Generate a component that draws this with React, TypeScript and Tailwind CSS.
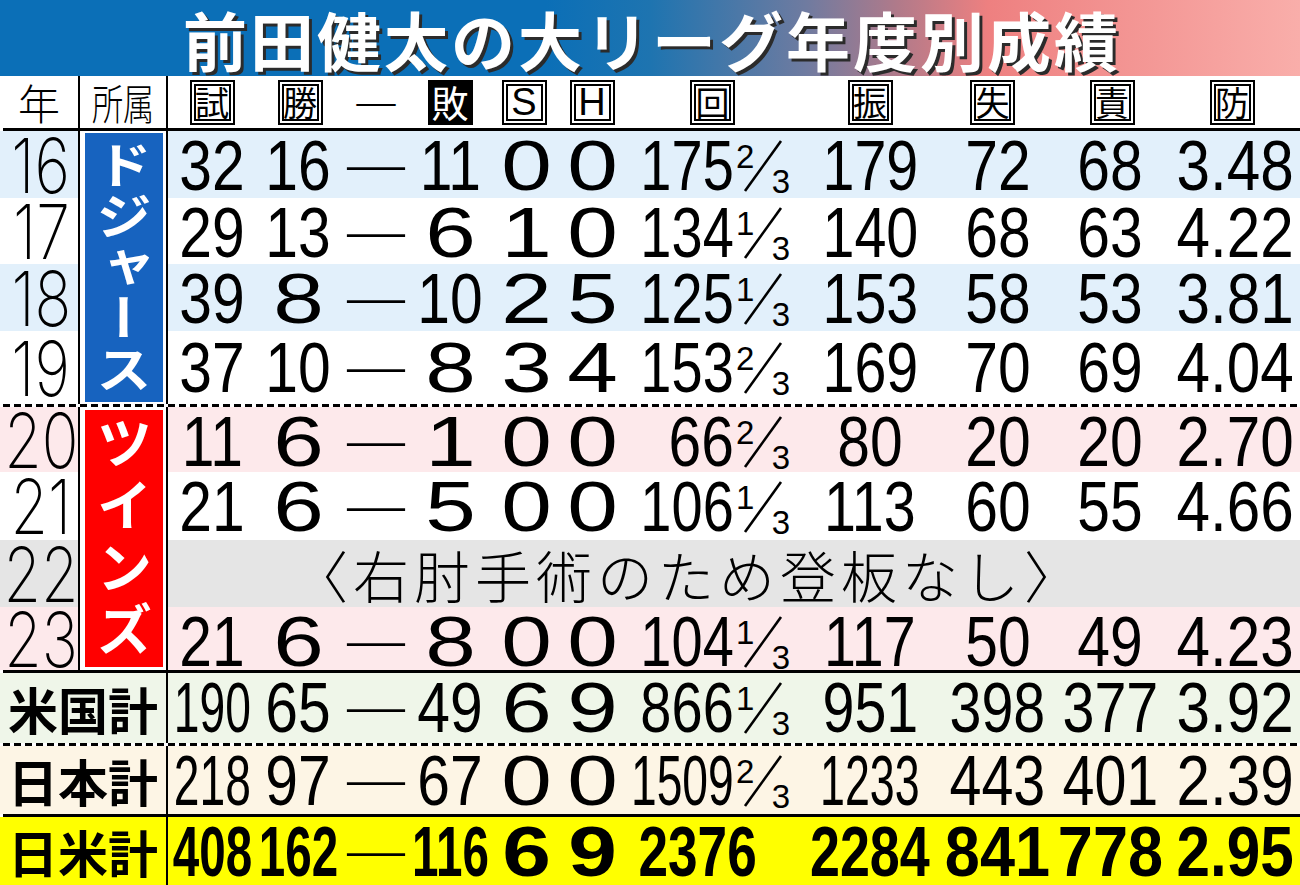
import React from 'react';

const NUM = "font-['Liberation_Sans',Arial,sans-serif]";
const JP = "font-['Noto_Sans_CJK_JP',sans-serif]";
const YEARF = "font-['Inter','DejaVu_Sans',sans-serif] font-extralight";

const BLUE = 'bg-[#e2f0fb]';
const WHITE = 'bg-white';
const PINK = 'bg-[#fde9eb]';
const GRAY = 'bg-[#e5e5e5]';
const GREEN = 'bg-[#eff6e9]';
const CREAM = 'bg-[#fdf5e5]';
const YELLOW = 'bg-[#ffff00]';

const COLS =
  'grid h-full grid-cols-[88px_84px_72px_76px_76px_56px_175px_150px_105px_120px_130px] items-center';

function scaleFor(col: number, v: string, bold?: boolean): string {
  if (v.includes('.')) return 'scale-x-[0.86]';
  if (v.length === 1) return bold ? 'scale-x-[1.25]' : 'scale-x-[1.3]';
  if (v.length === 2) return 'scale-x-[0.84]';
  if (v.length === 3) {
    if (col <= 3) return bold ? 'scale-x-[0.68]' : 'scale-x-[0.66]';
    return bold ? 'scale-x-[0.9]' : 'scale-x-[0.82]';
  }
  return bold ? 'scale-x-[0.77]' : 'scale-x-[0.64]';
}

function ipScale(v: string, bold?: boolean): string {
  if (bold) return 'scale-x-[0.76]';
  if (v.length === 2) return 'scale-x-[0.84]';
  if (v.length === 3) return 'scale-x-[0.8]';
  return 'scale-x-[0.66]';
}

function N({ col, v, bold }: { col: number; v: string; bold?: boolean }) {
  return <span className={`inline-block leading-none ${scaleFor(col, v, bold)}`}>{v}</span>;
}

function Frac({ n }: { n: string }) {
  return (
    <span className="relative ml-[2px] inline-block h-[52px] w-[54px] shrink-0">
      <span className="absolute left-[0px] top-[0px] text-[33px] leading-none">{n}</span>
      <svg className="absolute left-0 top-0" width="54" height="52" viewBox="0 0 54 52">
        <line x1="45" y1="1" x2="9" y2="51" stroke="#000" strokeWidth="2.6" />
      </svg>
      <span className="absolute bottom-[-6px] right-[0px] text-[33px] leading-none">3</span>
    </span>
  );
}

function DataCells({ d, bold }: { d: string[]; bold?: boolean }) {
  const [g, w, l, s, h, ip, fr, so, r, er, era] = d;
  return (
    <div className={`${COLS} text-[70px] text-black ${NUM} ${bold ? 'font-bold' : 'font-normal'}`}>
      <div className="flex justify-center">
        <N col={0} v={g} bold={bold} />
      </div>
      <div className="flex justify-center">
        <N col={1} v={w} bold={bold} />
      </div>
      <div className={`flex justify-center ${JP} text-[68px] font-normal leading-none`}>
        <span className="inline-block leading-none">―</span>
      </div>
      <div className="flex justify-center">
        <N col={3} v={l} bold={bold} />
      </div>
      <div className="flex justify-center">
        <N col={4} v={s} bold={bold} />
      </div>
      <div className="flex justify-center">
        <N col={5} v={h} bold={bold} />
      </div>
      <div className={`flex items-center justify-end ${fr ? 'pr-[5px]' : 'pr-[38px]'}`}>
        <span className={`inline-block origin-right leading-none ${ipScale(ip, bold)}`}>{ip}</span>
        {fr ? <Frac n={fr} /> : null}
      </div>
      <div className="flex justify-center">
        <N col={7} v={so} bold={bold} />
      </div>
      <div className="flex justify-center">
        <N col={8} v={r} bold={bold} />
      </div>
      <div className="flex justify-center">
        <N col={9} v={er} bold={bold} />
      </div>
      <div className="flex justify-center">
        <N col={10} v={era} bold={bold} />
      </div>
    </div>
  );
}

function Box({ t, latin, inv }: { t: string; latin?: boolean; inv?: boolean }) {
  const base = 'inline-flex h-[45px] w-[45px] items-center justify-center leading-none';
  if (inv) {
    return <span className={`${base} bg-black text-white ${JP} text-[37px]`}>{t}</span>;
  }
  return (
    <span
      className={`${base} border-[6px] border-double border-black bg-white text-black ${
        latin ? `${NUM} text-[38px]` : `${JP} text-[34px]`
      }`}
    >
      {t}
    </span>
  );
}

function HeaderCells() {
  return (
    <div className={`${COLS} bg-white`}>
      <div className="flex justify-center">
        <Box t="試" />
      </div>
      <div className="flex justify-center pl-[4px]">
        <Box t="勝" />
      </div>
      <div className={`flex justify-center ${JP} text-[46px] leading-none`}>
        <span className="inline-block leading-none">―</span>
      </div>
      <div className="flex justify-center">
        <Box t="敗" inv />
      </div>
      <div className="flex justify-center pr-[4px]">
        <Box t="S" latin />
      </div>
      <div className="flex justify-center">
        <Box t="H" latin />
      </div>
      <div className="flex justify-center pl-[10px]">
        <Box t="回" />
      </div>
      <div className="flex justify-center">
        <Box t="振" />
      </div>
      <div className="flex justify-center pr-[10px]">
        <Box t="失" />
      </div>
      <div className="flex justify-center pl-[4px]">
        <Box t="責" />
      </div>
      <div className="flex justify-center pr-[6px]">
        <Box t="防" />
      </div>
    </div>
  );
}

function Year({ y, bg }: { y: string; bg: string }) {
  return (
    <div className={`col-start-1 flex items-center justify-center border-r-2 border-black ${bg} pl-[4px]`}>
      <span className={`inline-block text-[76px] leading-none text-black ${YEARF} scale-x-[0.8]`}>{y}</span>
    </div>
  );
}

function DashLine({ span }: { span: string }) {
  return (
    <div
      className={`${span} ml-[3px] bg-[repeating-linear-gradient(to_right,#000_0px,#000_7px,transparent_7px,transparent_11px)]`}
    />
  );
}

const dodgers = [
  { y: '16', bg: BLUE, d: ['32', '16', '11', '0', '0', '175', '2', '179', '72', '68', '3.48'] },
  { y: '17', bg: WHITE, d: ['29', '13', '6', '1', '0', '134', '1', '140', '68', '63', '4.22'] },
  { y: '18', bg: BLUE, d: ['39', '8', '10', '2', '5', '125', '1', '153', '58', '53', '3.81'] },
  { y: '19', bg: WHITE, d: ['37', '10', '8', '3', '4', '153', '2', '169', '70', '69', '4.04'] },
];

const twins = [
  { y: '20', bg: PINK, d: ['11', '6', '1', '0', '0', '66', '2', '80', '20', '20', '2.70'] },
  { y: '21', bg: WHITE, d: ['21', '6', '5', '0', '0', '106', '1', '113', '60', '55', '4.66'] },
  { y: '22', bg: GRAY, d: [] as string[] },
  { y: '23', bg: PINK, d: ['21', '6', '8', '0', '0', '104', '1', '117', '50', '49', '4.23'] },
];

function Label({ t, bg }: { t: string; bg: string }) {
  return (
    <div className={`flex items-center justify-center border-r-2 border-black ${bg}`}>
      <span className={`${JP} text-[50px] font-bold leading-none text-black`}>{t}</span>
    </div>
  );
}

export default function App() {
  return (
    <div className="relative h-[885px] w-[1300px] overflow-hidden bg-white">
      {/* Title band */}
      <div className="flex h-[76px] items-center bg-[linear-gradient(to_right,#0b6fb7_0%,#0b6fb7_42%,#1e74b0_50%,#6f7ba0_62%,#b07a8a_69%,#ee8080_76%,#f9aeaa_100%)] pl-[183px]">
        <span
          className={`${JP} text-[64px] font-bold leading-none tracking-[3px] text-white [text-shadow:3px_3px_0_#2b2b2b]`}
        >
          前田健太の大リーグ年度別成績
        </span>
      </div>

      {/* Main table */}
      <div className="grid grid-cols-[80px_88px_1132px] grid-rows-[52px_3px_67px_66px_67px_73px_3px_65px_68px_67px_63px]">
        {/* header row */}
        <div className="col-start-1 flex items-center justify-center border-r-2 border-black bg-white">
          <span className={`${JP} text-[42px] font-light leading-none text-black`}>年</span>
        </div>
        <div className="col-start-2 flex items-center justify-center border-r-2 border-black bg-white">
          <span className={`inline-block ${JP} text-[42px] font-light leading-none text-black scale-x-[0.74]`}>
            所属
          </span>
        </div>
        <div className="col-start-3">
          <HeaderCells />
        </div>

        <div className="col-span-3 ml-[3px] bg-black" />

        {dodgers.map((r, i) => (
          <React.Fragment key={r.y}>
            <Year y={r.y} bg={r.bg} />
            {i === 0 ? (
              <div className="col-start-2 row-span-4 border-r-2 border-black bg-white py-[2px] pl-[5px] pr-[3px]">
                <div className="flex h-full items-center justify-center bg-[#1763bf]">
                  <span
                    className={`inline-block ${JP} text-[50px] font-bold leading-none tracking-[1px] text-white [writing-mode:vertical-rl] scale-x-[1.12]`}
                  >
                    ドジャース
                  </span>
                </div>
              </div>
            ) : null}
            <div className={`col-start-3 ${r.bg}`}>
              <DataCells d={r.d} />
            </div>
          </React.Fragment>
        ))}

        <DashLine span="col-span-3" />

        {twins.map((r, i) => (
          <React.Fragment key={r.y}>
            <Year y={r.y} bg={r.bg} />
            {i === 0 ? (
              <div className="col-start-2 row-span-4 border-r-2 border-black bg-white py-[3px] pl-[5px] pr-[3px]">
                <div className="flex h-full items-center justify-center bg-[#ff0000]">
                  <span
                    className={`inline-block ${JP} text-[56px] font-bold leading-none tracking-[6px] text-white [writing-mode:vertical-rl]`}
                  >
                    ツインズ
                  </span>
                </div>
              </div>
            ) : null}
            {r.d.length ? (
              <div className={`col-start-3 ${r.bg}`}>
                <DataCells d={r.d} />
              </div>
            ) : (
              <div className={`col-start-3 flex items-center ${r.bg} pl-[124px]`}>
                <span className={`${JP} text-[56px] font-light leading-none tracking-[5px] text-black`}>
                  〈右肘手術のため登板なし〉
                </span>
              </div>
            )}
          </React.Fragment>
        ))}
      </div>

      {/* Totals */}
      <div className="grid grid-cols-[168px_1132px] grid-rows-[3px_70px_3px_68px_3px_68px]">
        <div className="col-span-2 ml-[3px] bg-black" />
        <Label t="米国計" bg={GREEN} />
        <div className={GREEN}>
          <DataCells d={['190', '65', '49', '6', '9', '866', '1', '951', '398', '377', '3.92']} />
        </div>
        <DashLine span="col-span-2" />
        <Label t="日本計" bg={CREAM} />
        <div className={CREAM}>
          <DataCells d={['218', '97', '67', '0', '0', '1509', '2', '1233', '443', '401', '2.39']} />
        </div>
        <div className="col-span-2 ml-[3px] bg-black" />
        <Label t="日米計" bg={YELLOW} />
        <div className={YELLOW}>
          <DataCells d={['408', '162', '116', '6', '9', '2376', '', '2284', '841', '778', '2.95']} bold />
        </div>
      </div>
    </div>
  );
}
